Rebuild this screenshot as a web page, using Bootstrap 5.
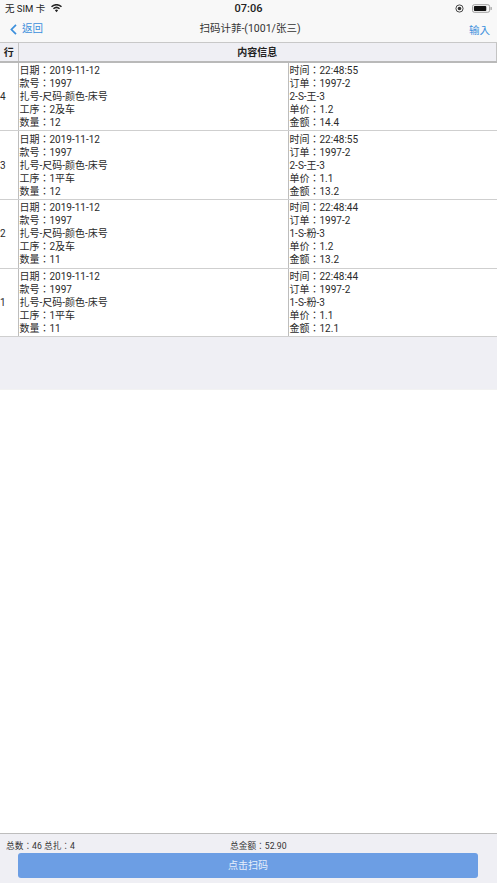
<!DOCTYPE html>
<html lang="zh-TW">
<head>
<meta charset="utf-8">
<link href="https://cdn.jsdelivr.net/npm/bootstrap@5.3.0/dist/css/bootstrap.min.css" rel="stylesheet">
<style>
html,body{height:100%;margin:0}
body{font-family:"Roboto","Noto Sans CJK TC",sans-serif;color:#222;background:#fff;width:497px;height:883px;overflow:hidden}
.app-shell{height:883px}
.status-row{height:16px;background:#f8f8f8;font-size:9.5px;line-height:16px;padding:1px 5px 0 5px;color:#222}
.status-side{width:120px}
.status-time{font-weight:500;font-size:11px}
.nav-row{height:27px;background:#f8f8f8;border-bottom:1px solid #c8c8c8;padding:0 7px 0 10px}
.nav-side{width:100px}
.nav-link-blue{color:#3b8fdc;font-size:10.5px;text-decoration:none}
.nav-back{gap:5px}
.nav-title{color:#333;font-size:10.5px}
.wifi-mark{margin-left:2px}
.grid-table{width:100%;table-layout:fixed;border-collapse:collapse;margin:0;font-size:10px;line-height:13px}
.grid-table th{height:19px;background:#efeff4;border-bottom:2px solid #b9b9b9;font-size:10px;font-weight:700;text-align:center;padding:0;color:#222}
.grid-table th+th{border-left:1px solid #c4c4c4;border-right:1px solid #c4c4c4}
.grid-table td{height:68.7px;border-bottom:1.5px solid #cfcfcf;padding:0 0 0 1px;vertical-align:middle;color:#2a2a2a;background:#fff}
.grid-table td.idx{padding-left:0}
.grid-table td+td{border-left:1.5px solid #bdbdbd}
.col-idx{width:18px}
.col-left{width:270px}
.gray-band{height:53px;background:#efeff4;border-bottom:1px solid #f2f2f2}
.foot-bar{height:50px;background:#efeff4;border-top:1px solid #bdbdbd;font-size:8.7px;color:#333}
.foot-info{height:19px;padding:4px 0 0 6px;line-height:16px}
.foot-left{width:224px}
.scan-btn{display:block;width:460px;height:25px;margin-left:18px;padding:0;border:0;border-radius:3px;background:#6c9ee4;color:#e6eefb;font-size:10px;line-height:25px;text-align:center}
</style>
</head>
<body>
<div class="app-shell d-flex flex-column">
  <div class="status-row d-flex align-items-center justify-content-between">
    <div class="status-side d-flex align-items-center gap-1">
      <span>无 SIM 卡</span>
      <svg class="wifi-mark" width="11" height="9" viewBox="0 0 13 10"><path d="M6.5 9.4 4.6 7.2a2.8 2.8 0 0 1 3.8 0zM3.5 6 2.3 4.7a6.2 6.2 0 0 1 8.4 0L9.5 6a4.5 4.5 0 0 0-6 0zM1.2 3.5 0 2.2a9.5 9.5 0 0 1 13 0l-1.2 1.3a7.8 7.8 0 0 0-10.6 0z" fill="#222"/></svg>
    </div>
    <span class="status-time">07:06</span>
    <div class="status-side d-flex align-items-center justify-content-end gap-1">
      <svg width="9" height="9" viewBox="0 0 10 10"><circle cx="5" cy="5" r="4" fill="none" stroke="#333" stroke-width="1"/><circle cx="5" cy="5" r="2" fill="#333"/></svg>
      <svg class="ms-1" width="20" height="9" viewBox="0 0 21 9"><rect x=".5" y=".5" width="18" height="8" rx="2" fill="none" stroke="#999"/><rect x="2" y="2" width="13" height="5" rx="1" fill="#111"/><rect x="19.5" y="3" width="1.2" height="3" fill="#999"/></svg>
    </div>
  </div>
  <div class="nav-row d-flex align-items-center justify-content-between">
    <a class="nav-side nav-link-blue nav-back d-flex align-items-center" href="#">
      <svg width="7" height="11" viewBox="0 0 7 11"><path d="M6 .8 1.4 5.5 6 10.2" fill="none" stroke="#3b8fdc" stroke-width="1.7"/></svg>
      <span>返回</span>
    </a>
    <span class="nav-title">扫码计菲-(1001/张三)</span>
    <div class="nav-side text-end"><a class="nav-link-blue" href="#">输入</a></div>
  </div>
  <table class="grid-table">
    <colgroup><col class="col-idx"><col class="col-left"><col></colgroup>
    <thead><tr><th>行</th><th colspan="2">内容信息</th></tr></thead>
    <tbody>
      <tr><td class="idx">4</td><td>日期：2019-11-12<br>款号：1997<br>扎号-尺码-颜色-床号<br>工序：2及车<br>数量：12</td><td>时间：22:48:55<br>订单：1997-2<br>2-S-王-3<br>单价：1.2<br>金额：14.4</td></tr>
      <tr><td class="idx">3</td><td>日期：2019-11-12<br>款号：1997<br>扎号-尺码-颜色-床号<br>工序：1平车<br>数量：12</td><td>时间：22:48:55<br>订单：1997-2<br>2-S-王-3<br>单价：1.1<br>金额：13.2</td></tr>
      <tr><td class="idx">2</td><td>日期：2019-11-12<br>款号：1997<br>扎号-尺码-颜色-床号<br>工序：2及车<br>数量：11</td><td>时间：22:48:44<br>订单：1997-2<br>1-S-粉-3<br>单价：1.2<br>金额：13.2</td></tr>
      <tr><td class="idx">1</td><td>日期：2019-11-12<br>款号：1997<br>扎号-尺码-颜色-床号<br>工序：1平车<br>数量：11</td><td>时间：22:48:44<br>订单：1997-2<br>1-S-粉-3<br>单价：1.1<br>金额：12.1</td></tr>
    </tbody>
  </table>
  <div class="gray-band"></div>
  <div class="flex-grow-1"></div>
  <div class="foot-bar">
    <div class="foot-info d-flex"><span class="foot-left">总数：46 总扎：4</span><span>总金额：52.90</span></div>
    <button class="scan-btn" type="button">点击扫码</button>
  </div>
</div>
<script src="https://cdn.jsdelivr.net/npm/bootstrap@5.3.0/dist/js/bootstrap.bundle.min.js"></script>
</body>
</html>
